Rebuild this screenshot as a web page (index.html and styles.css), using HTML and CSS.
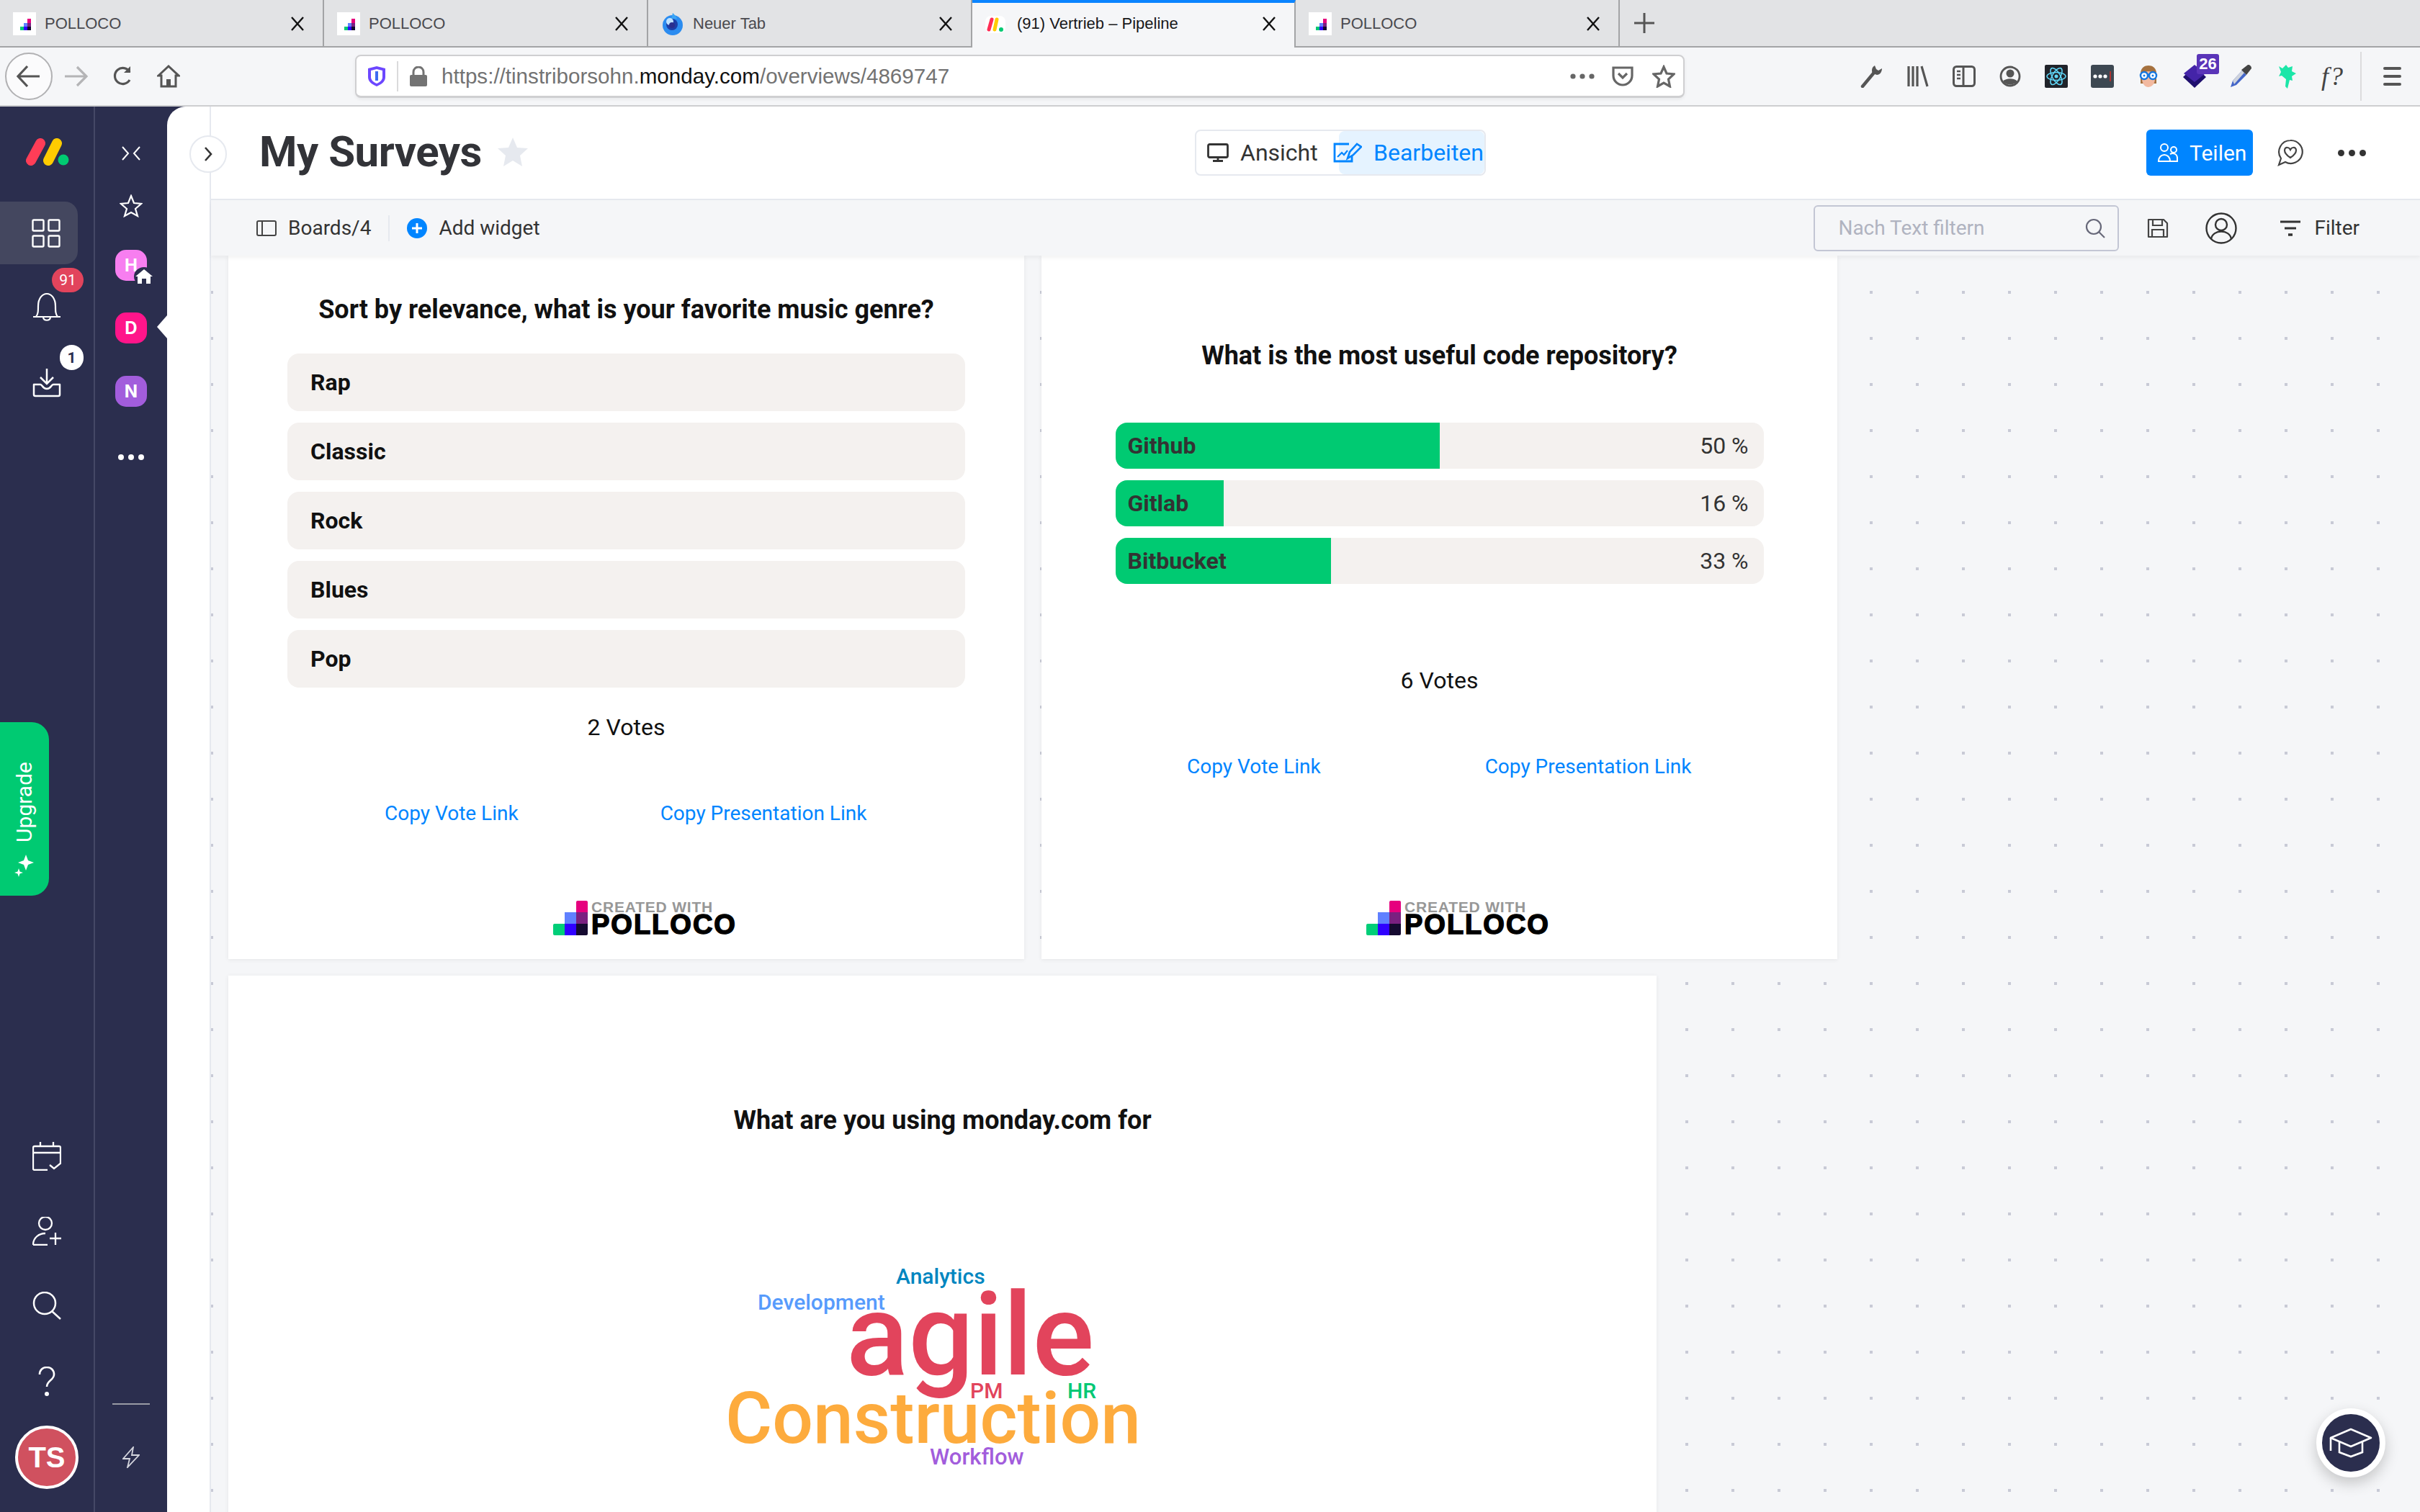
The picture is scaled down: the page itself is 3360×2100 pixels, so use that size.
FILE: index.html
```html
<!DOCTYPE html>
<html lang="de">
<head>
<meta charset="utf-8">
<title>My Surveys</title>
<link rel="stylesheet" href="styles.css">
</head>
<body>
<svg class="defs" width="0" height="0">
  <defs>
    <symbol id="pollo" viewBox="0 0 32 32"><rect width="32" height="32" fill="#fff"/><rect x="10" y="20" width="5" height="5" fill="#00c875"/><rect x="15" y="15" width="5" height="5" fill="#6080ff"/><rect x="15" y="20" width="5" height="5" fill="#3000ff"/><rect x="20" y="9" width="5" height="6" fill="#e6007e"/><rect x="20" y="15" width="5" height="5" fill="#7a2080"/><rect x="20" y="20" width="5" height="5" fill="#150a30"/></symbol>
    <symbol id="closex" viewBox="0 0 20 20"><path d="M2 1l16 18M18 1L2 19" stroke="#111" stroke-width="2.4" fill="none"/></symbol>
  </defs>
</svg>
<header class="tabbar">
  <div class="tab"><svg class="fav"><use href="#pollo"/></svg><span class="tab-title">POLLOCO</span><svg class="close"><use href="#closex"/></svg></div>
  <div class="tab"><svg class="fav"><use href="#pollo"/></svg><span class="tab-title">POLLOCO</span><svg class="close"><use href="#closex"/></svg></div>
  <div class="tab"><svg class="fav" viewBox="0 0 32 32"><circle cx="16" cy="18" r="14" fill="#2b8cf0"/><path d="M16 1c3 3 5 5 6 8l-8 1z" fill="#3aa5f5"/><circle cx="15" cy="17" r="8" fill="#1c3fa8"/><circle cx="12" cy="13" r="5" fill="#bfe2ff"/><circle cx="15" cy="18" r="4" fill="#2a2f8f"/></svg><span class="tab-title">Neuer Tab</span><svg class="close"><use href="#closex"/></svg></div>
  <div class="tab tab-active"><svg class="fav" viewBox="0 0 32 32"><rect x="2" y="5" width="28" height="24" rx="8" fill="#fff"/><path d="M7 24l4-14" stroke="#ff2d55" stroke-width="5" stroke-linecap="round"/><path d="M15 24l3-14" stroke="#ffcb00" stroke-width="5" stroke-linecap="round"/><circle cx="24" cy="24" r="3" fill="#00ca72"/></svg><span class="tab-title">(91) Vertrieb – Pipeline</span><svg class="close"><use href="#closex"/></svg></div>
  <div class="tab"><svg class="fav"><use href="#pollo"/></svg><span class="tab-title">POLLOCO</span><svg class="close"><use href="#closex"/></svg></div>
  <div class="newtab"><svg width="28" height="28" viewBox="0 0 28 28"><path d="M14 0v28M0 14h28" stroke="#555" stroke-width="3"/></svg></div>
</header>

<nav class="navbar">
  <div class="back"><svg width="34" height="32" viewBox="0 0 34 32"><path d="M32 16H3M15 2L2 16l13 14" fill="none" stroke="#555" stroke-width="3.2"/></svg></div>
  <div class="slot"><svg width="32" height="30" viewBox="0 0 32 30"><path d="M0 15h29M17 2l13 13-13 13" fill="none" stroke="#b4b4b6" stroke-width="3.2"/></svg></div>
  <div class="slot"><svg width="32" height="30" viewBox="0 0 32 30"><path d="M26 20a11 11 0 1 1 0-11" fill="none" stroke="#555" stroke-width="3.2"/><path d="M27 1v9h-9z" fill="#555"/></svg></div>
  <div class="slot"><svg width="32" height="32" viewBox="0 0 32 32"><path d="M2 15L16 2l14 13h-4v15H6V15z" fill="none" stroke="#555" stroke-width="3"/><rect x="13" y="20" width="6" height="10" fill="#555"/></svg></div>
  <div class="urlbar">
    <svg class="shield" width="26" height="30" viewBox="0 0 26 30"><path d="M13 1l12 3v12c0 6-5 10-12 13C6 26 1 22 1 16V4z" fill="#6c47ff"/><path d="M13 5l8 2v9c0 4-3 7-8 9-5-2-8-5-8-9V7z" fill="#fff"/><path d="M11 8h4v13h-4z" fill="#3d6cf0"/></svg>
    <span class="url-sep"></span>
    <svg class="lock" width="26" height="28" viewBox="0 0 26 28"><path d="M6 12V8a7 7 0 0 1 14 0v4" fill="none" stroke="#737373" stroke-width="3"/><rect x="1" y="12" width="24" height="16" rx="2" fill="#737373"/></svg>
    <span class="url"><span class="url-dim">https://tinstriborsohn.</span>monday.com<span class="url-dim">/overviews/4869747</span></span>
    <svg class="url-dots" width="34" height="8" viewBox="0 0 34 8"><circle cx="4" cy="4" r="3.6" fill="#666"/><circle cx="17" cy="4" r="3.6" fill="#666"/><circle cx="30" cy="4" r="3.6" fill="#666"/></svg>
    <svg class="pocket" width="30" height="28" viewBox="0 0 30 28"><path d="M2 2h26v11a13 13 0 0 1-26 0z" fill="none" stroke="#666" stroke-width="3.2"/><path d="M9 10l6 6 6-6" fill="none" stroke="#666" stroke-width="3.2"/></svg>
    <svg class="urlstar" width="32" height="32" viewBox="0 0 32 32"><path d="M16 3l4 9 10 1-7.500 7 2 10L16 25l-8.500 5 2-10L2 13l10-1z" fill="none" stroke="#666" stroke-width="3.200"/></svg>
  </div>
  <div class="ext-group">
    <div class="slot"><svg width="32" height="32" viewBox="0 0 32 32"><path d="M3 30L18 12" stroke="#555" stroke-width="4.500" stroke-linecap="round"/><path d="M20 1c-4 2-5 7-3 11l6 2c4 0 7-4 7-9l-5 3-3-2z" fill="#555"/></svg></div>
    <div class="slot"><svg width="32" height="30" viewBox="0 0 32 30"><path d="M3 1v28M9 1v28M15 1v28M21 1l8 28" stroke="#555" stroke-width="3.200" fill="none"/></svg></div>
    <div class="slot"><svg width="32" height="30" viewBox="0 0 32 30"><rect x="1.500" y="1.500" width="29" height="27" rx="4" fill="none" stroke="#555" stroke-width="3"/><path d="M15 2v26" stroke="#555" stroke-width="3"/><path d="M6 8h5M6 13h5M6 18h5" stroke="#555" stroke-width="2.500"/></svg></div>
    <div class="slot"><svg width="30" height="30" viewBox="0 0 30 30"><circle cx="15" cy="15" r="13" fill="none" stroke="#555" stroke-width="2.800"/><circle cx="15" cy="11" r="5.500" fill="#555"/><path d="M5 22c4-5 16-5 20 0-5 6-15 6-20 0z" fill="#555"/></svg></div>
    <div class="slot"><svg width="32" height="32" viewBox="0 0 32 32"><rect width="32" height="32" rx="2" fill="#20232a"/><g fill="none" stroke="#61dafb" stroke-width="1.500"><ellipse cx="16" cy="16" rx="13" ry="5.500"/><ellipse cx="16" cy="16" rx="13" ry="5.500" transform="rotate(60 16 16)"/><ellipse cx="16" cy="16" rx="13" ry="5.500" transform="rotate(120 16 16)"/></g><circle cx="16" cy="16" r="2.500" fill="#61dafb"/></svg></div>
    <div class="slot"><svg width="32" height="32" viewBox="0 0 32 32"><rect width="32" height="32" rx="3" fill="#3d4852"/><circle cx="6" cy="16" r="2.600" fill="#fff"/><circle cx="13" cy="16" r="2.600" fill="#fff"/><circle cx="20" cy="16" r="2.600" fill="#fff"/><path d="M27 9v14" stroke="#d32d27" stroke-width="1.500"/></svg></div>
    <div class="slot"><svg width="30" height="32" viewBox="0 0 30 32"><path d="M4 26V12C4 4 10 1 15 1s11 3 11 11v14z" fill="#a5713f"/><ellipse cx="15" cy="20" rx="9" ry="11" fill="#f2b9a0"/><circle cx="9" cy="15" r="5" fill="#fff" stroke="#1577e0" stroke-width="2.500"/><circle cx="21" cy="15" r="5" fill="#fff" stroke="#1577e0" stroke-width="2.500"/><circle cx="9" cy="15" r="1.500" fill="#1577e0"/><circle cx="21" cy="15" r="1.500" fill="#1577e0"/></svg></div>
    <div class="slot slot-badged"><svg width="32" height="32" viewBox="0 0 32 32"><path d="M16 2l16 15-16 15L0 17z" fill="#1f0f6e"/><path d="M16 0l15 12-15 12L1 12z" fill="#4424a8"/></svg><span class="ext-badge">26</span></div>
    <div class="slot"><svg width="32" height="34" viewBox="0 0 32 34"><path d="M2 32l3-9 13-14 6 6-14 14z" fill="#4466c8"/><path d="M5 23L18 9l3 3L7 28z" fill="#cfd3dc"/><path d="M17 8l9-7c3 0 5 2 5 5l-7 9z" fill="#444"/></svg></div>
    <div class="slot"><svg width="28" height="34" viewBox="0 0 28 34"><path d="M3 3l5 3 5-5 3 4 6-2-1 7 6 3-6 4 1 6-4-1-3 12-3-3 1-10-6-5-4 1 3-6z" fill="#1ce6a8"/></svg></div>
    <div class="slot"><span class="fq">f?</span></div>
  </div>
  <span class="nav-sep"></span>
  <div class="burger"><span></span><span></span><span></span></div>
</nav>

<div class="app">
  <aside class="rail">
    <svg class="logo" width="62" height="38" viewBox="0 0 62 38"><path d="M9 31L22 7" stroke="#ff3d57" stroke-width="14" stroke-linecap="round"/><path d="M33 31L45 7" stroke="#ffcb00" stroke-width="14" stroke-linecap="round"/><circle cx="54" cy="30" r="7.500" fill="#00ca72"/></svg>
    <div class="rail-active"><svg width="40" height="40" viewBox="0 0 40 40"><g fill="none" stroke="#fff" stroke-width="2.400"><rect x="1.500" y="1.500" width="15" height="15" rx="1.500"/><rect x="23.500" y="1.500" width="15" height="15" rx="1.500"/><rect x="1.500" y="23.500" width="15" height="15" rx="1.500"/><rect x="23.500" y="23.500" width="15" height="15" rx="1.500"/></g></svg></div>
    <div class="rail-bell"><svg width="40" height="40" viewBox="0 0 40 40"><path d="M1 34h38M5 34c3-4 3-8 3-15C8 8 14 2 20 2s12 6 12 17c0 7 0 11 3 15M15 35c1 5 9 5 10 0" fill="none" stroke="#fff" stroke-width="2.200"/></svg><span class="badge badge-red">91</span></div>
    <div class="rail-dl"><svg width="40" height="40" viewBox="0 0 40 40"><path d="M20 0v20M11 12l9 9 9-9" fill="none" stroke="#fff" stroke-width="2.500"/><path d="M2 22h9c3 0 3 6 9 6s6-6 9-6h9v14a2 2 0 0 1-2 2H4a2 2 0 0 1-2-2z" fill="none" stroke="#fff" stroke-width="2.500" stroke-linejoin="round"/></svg><span class="badge badge-white">1</span></div>
    <div class="rail-bottom">
      <svg width="40" height="40" viewBox="0 0 40 40"><path d="M21 39H3a2 2 0 0 1-2-2V8a2 2 0 0 1 2-2h34a2 2 0 0 1 2 2v22M1 15h38M11 0v6M29 0v6" fill="none" stroke="#fff" stroke-width="2.300"/><path d="M24 32l6 5 10-8" fill="none" stroke="#fff" stroke-width="2.300"/></svg>
      <svg width="40" height="40" viewBox="0 0 40 40"><circle cx="18" cy="9" r="9" fill="none" stroke="#fff" stroke-width="2.300"/><path d="M1 39c0-10 8-16 17-16M1 39h20M24 30h16M32 22v17" fill="none" stroke="#fff" stroke-width="2.300"/></svg>
      <svg width="40" height="40" viewBox="0 0 40 40"><circle cx="17" cy="16" r="15" fill="none" stroke="#fff" stroke-width="2.500"/><path d="M27 27l12 11" stroke="#fff" stroke-width="2.500"/></svg>
      <svg width="24" height="42" viewBox="0 0 24 42"><path d="M2 11C2 5 6 1 12 1s10 4 10 10c0 8-10 8-10 17" fill="none" stroke="#fff" stroke-width="2.600"/><circle cx="12" cy="38" r="3" fill="#fff"/></svg>
      <div class="avatar">TS</div>
    </div>
  </aside>
  <aside class="rail2">
    <svg class="r2-collapse" width="28" height="20" viewBox="0 0 28 20"><path d="M2 1l8 9-8 9M26 1l-8 9 8 9" fill="none" stroke="#fff" stroke-width="2"/></svg>
    <svg class="r2-star" width="32" height="32" viewBox="0 0 32 32"><path d="M16 2l4 10 10 1-8 7 3 10-9-5-9 5 3-10-8-7 10-1z" fill="none" stroke="#fff" stroke-width="2.200"/></svg>
    <div class="ws ws-h">H<span class="ws-home"><svg width="24" height="20" viewBox="0 0 24 20"><path d="M0 10L12 0l12 10h-3v10h-6v-7H9v7H3V10z" fill="#fff"/></svg></span></div>
    <div class="ws ws-d">D</div>
    <div class="ws ws-n">N</div>
    <div class="r2-dots"><span></span><span></span><span></span></div>
    <div class="r2-bottom">
      <span class="r2-line"></span>
      <svg width="24" height="30" viewBox="0 0 24 30"><path d="M15 1L1 17h9l-3 12 16-17h-10z" fill="none" stroke="#d5d6de" stroke-width="1.800"/></svg>
    </div>
  </aside>
  <span class="notch"></span>
  <div class="upgrade"><svg class="spark" width="32" height="30" viewBox="0 0 32 30"><path d="M20 6l3 8 8 3-8 3-3 8-3-8-8-3 8-3zM6 1l1.500 4.500L12 7 7.500 8.500 6 13 4.500 8.500 0 7l4.500-1.500z" fill="#fff"/></svg><span class="upgrade-text">Upgrade</span></div>

  <main class="main">
    <button class="panel-toggle"><svg width="14" height="24" viewBox="0 0 14 24"><path d="M3 3l8 9-8 9" fill="none" stroke="#333" stroke-width="2.600"/></svg></button>
    <div class="content">
      <section class="head">
        <div class="head-left">
          <h1 class="page-title">My Surveys</h1>
          <svg class="title-star" width="42" height="40" viewBox="0 0 42 40"><path d="M21 0l6 14 15 1-11 10 3 15-13-8-13 8 3-15L0 15l15-1z" fill="#e6e9ef"/></svg>
        </div>
        <div class="mode">
          <div class="mode-view"><svg width="30" height="26" viewBox="0 0 30 26"><rect x="1.500" y="1.500" width="27" height="18" rx="2" fill="none" stroke="#333" stroke-width="2.800"/><path d="M15 20v4M8 24.500h14" stroke="#333" stroke-width="2.800"/></svg><span>Ansicht</span></div>
          <div class="mode-edit"><svg class="edit-ico" width="40" height="28" viewBox="0 0 40 28"><path d="M22 2H2v24h24V14" fill="none" stroke="#0085ff" stroke-width="2.800"/><path d="M6 20l6-6 3 3 5-6" fill="none" stroke="#0085ff" stroke-width="2.200"/><path d="M20 22l3-9L33 2l6 4-11 11z" fill="#e5f3ff" stroke="#0085ff" stroke-width="2.600"/></svg><span>Bearbeiten</span></div>
        </div>
        <div class="head-right">
          <button class="share"><svg width="28" height="26" viewBox="0 0 28 26"><g fill="none" stroke="#fff" stroke-width="2"><circle cx="9" cy="6" r="5"/><circle cx="22" cy="9" r="4"/><path d="M1 25c0-12 16-12 16 0zM17 15c4-2 10-1 10 6v4H17"/></g></svg><span>Teilen</span></button>
          <svg class="heart-chat" width="36" height="38" viewBox="0 0 36 38"><path d="M18 2a16 16 0 1 1-7 30l-9 4 3-9A16 16 0 0 1 18 2z" fill="none" stroke="#444" stroke-width="2.200"/><path d="M18 26c-12-8-8-15-4-14 2 0 3 1 4 3 1-2 2-3 4-3 4-1 8 6-4 14z" fill="none" stroke="#444" stroke-width="2.200"/></svg>
          <div class="more"><span></span><span></span><span></span></div>
        </div>
      </section>
      <section class="tools">
        <svg class="t-board" width="28" height="22" viewBox="0 0 28 22"><rect x="1" y="1" width="26" height="20" rx="2" fill="none" stroke="#444" stroke-width="2"/><path d="M8 1v20" stroke="#444" stroke-width="2"/></svg>
        <span class="t-text t-boards">Boards/4</span>
        <span class="t-sep"></span>
        <svg class="t-add" width="28" height="28" viewBox="0 0 28 28"><circle cx="14" cy="14" r="14" fill="#0085ff"/><path d="M14 7v14M7 14h14" stroke="#fff" stroke-width="3"/></svg>
        <span class="t-text">Add widget</span>
        <div class="search"><span class="ph">Nach Text filtern</span><svg width="28" height="28" viewBox="0 0 28 28"><circle cx="12" cy="12" r="10" fill="none" stroke="#676879" stroke-width="2.200"/><path d="M19 19l8 8" stroke="#676879" stroke-width="2.200"/></svg></div>
        <svg class="t-save" width="30" height="28" viewBox="0 0 30 28"><path d="M2 2h21l5 5v19H2z" fill="none" stroke="#444" stroke-width="2.200" stroke-linejoin="round"/><path d="M8 2v8h13V2M7 26V16h16v10" fill="none" stroke="#444" stroke-width="2.200"/></svg>
        <svg class="t-user" width="44" height="44" viewBox="0 0 44 44"><circle cx="22" cy="22" r="20.500" fill="none" stroke="#333" stroke-width="2.400"/><circle cx="22" cy="17" r="8" fill="none" stroke="#333" stroke-width="2.400"/><path d="M8 37c2-14 26-14 28 0" fill="none" stroke="#333" stroke-width="2.400"/></svg>
        <svg class="t-filter" width="28" height="22" viewBox="0 0 28 22"><path d="M0 2h28M6 11h16" stroke="#333" stroke-width="3"/><path d="M11 20h6" stroke="#333" stroke-width="3.500"/></svg>
        <span class="t-text">Filter</span>
      </section>
      <section class="canvas">
        <div class="board">
          <article class="card card-rank">
            <h2 class="q">Sort by relevance, what is your favorite music genre?</h2>
            <ul class="opts">
              <li class="opt">Rap</li>
              <li class="opt">Classic</li>
              <li class="opt">Rock</li>
              <li class="opt">Blues</li>
              <li class="opt">Pop</li>
            </ul>
            <p class="votes">2 Votes</p>
            <div class="links links-rank"><a class="lnk">Copy Vote Link</a><a class="lnk">Copy Presentation Link</a></div>
            <div class="brand">
              <div class="brand-mark"><i class="m0"></i><i class="m0"></i><i class="m1"></i><i class="m0"></i><i class="m2"></i><i class="m3"></i><i class="m4"></i><i class="m5"></i><i class="m6"></i></div>
              <div class="brand-text"><span class="b-small">CREATED WITH</span><span class="b-big">POLLOCO</span></div>
            </div>
          </article>
          <article class="card card-poll">
            <h2 class="q">What is the most useful code repository?</h2>
            <div class="bars">
              <div class="bar"><div class="fill" style="width:50%"></div><span class="bar-l">Github</span><span class="bar-v">50 %</span></div>
              <div class="bar"><div class="fill" style="width:16.670%"></div><span class="bar-l">Gitlab</span><span class="bar-v">16 %</span></div>
              <div class="bar"><div class="fill" style="width:33.330%"></div><span class="bar-l">Bitbucket</span><span class="bar-v">33 %</span></div>
            </div>
            <p class="votes">6 Votes</p>
            <div class="links links-poll"><a class="lnk">Copy Vote Link</a><a class="lnk">Copy Presentation Link</a></div>
            <div class="brand">
              <div class="brand-mark"><i class="m0"></i><i class="m0"></i><i class="m1"></i><i class="m0"></i><i class="m2"></i><i class="m3"></i><i class="m4"></i><i class="m5"></i><i class="m6"></i></div>
              <div class="brand-text"><span class="b-small">CREATED WITH</span><span class="b-big">POLLOCO</span></div>
            </div>
          </article>
          <article class="card card-cloud">
            <h2 class="q">What are you using monday.com for</h2>
            <span class="w w-analytics">Analytics</span>
            <span class="w w-dev">Development</span>
            <span class="w w-agile">agile</span>
            <span class="w w-pm">PM</span>
            <span class="w w-hr">HR</span>
            <span class="w w-con">Construction</span>
            <span class="w w-flow">Workflow</span>
          </article>
        </div>
        <button class="help"><svg width="60" height="42" viewBox="0 0 60 42"><path d="M2 14L30 2l28 12-28 12z" fill="none" stroke="#fff" stroke-width="2.600" stroke-linejoin="round"/><path d="M14 20v14l16 6 16-6V20M2 14v18" fill="none" stroke="#fff" stroke-width="2.600"/></svg></button>
      </section>
    </div>
  </main>
</div>
</body>
</html>
```
FILE: styles.css
```css
* { box-sizing: border-box; }
html, body { margin: 0; padding: 0; }
body { width: 3360px; height: 2100px; overflow: hidden; display: flex; flex-direction: column; font-family: Roboto, "Liberation Sans", sans-serif; background: #f5f6f8; color: #333; }
.defs { position: absolute; }
svg { display: block; flex: none; }

/* browser chrome */
.tabbar { height: 66px; display: flex; background: #e2e3e5; border-bottom: 2px solid #a3a4a6; font-family: "Liberation Sans", Arial, sans-serif; }
.tab { width: 450px; height: 66px; display: flex; align-items: center; padding: 0 25px 0 18px; border-right: 2px solid #a3a4a6; }
.tab:nth-child(4) { width: 449px; }
.tab-active { background: #f5f6f8; border-top: 4px solid #0a84ff; padding-top: 0; padding-left: 16px; color: #111; }
.tab-active .fav { margin-top: -4px; }
.tab-active .close { margin-top: -4px; }
.tab-active .tab-title { margin-top: -4px; }
.fav { width: 32px; height: 32px; }
.close { width: 20px; height: 20px; margin-left: auto; }
.tab-title { font-size: 22px; margin-left: 12px; color: #4a4a4f; white-space: nowrap; }
.tab-active .tab-title { color: #18181a; margin-left: 14px; }
.newtab { margin: 0 0 0 20px; height: 66px; display: flex; align-items: center; padding-bottom: 2px; }

.navbar { height: 82px; display: flex; align-items: center; background: #f5f6f8; border-bottom: 2px solid #cecfd1; }
.back { width: 66px; height: 66px; margin-left: 7px; border-radius: 50%; background: #fbfbfc; border: 2px solid #b1b1b3; display: flex; align-items: center; justify-content: center; }
.slot { width: 64px; height: 48px; display: flex; align-items: center; justify-content: center; position: relative; }
.navbar > .slot:nth-child(2) { margin-left: 1px; }
.urlbar { width: 1846px; height: 60px; margin-left: 227px; background: #fff; border: 2px solid #cfcfd1; border-bottom-width: 3px; border-radius: 8px; display: flex; align-items: center; padding-left: 15px; box-shadow: 0 2px 5px rgba(0,0,0,.06); }
.url-sep { width: 2px; height: 42px; background: #dadadb; margin: 0 15px; }
.url { font-size: 29.600px; margin-left: 19px; color: #111; font-family: "Liberation Sans", Arial, sans-serif; white-space: nowrap; }
.url-dim { color: #737373; }
.url-dots { margin-left: auto; }
.pocket { margin-left: 24px; }
.urlstar { margin: 0 11px 0 26px; }
.ext-group { display: flex; margin-left: 228px; }
.ext-badge { position: absolute; left: 35px; top: -7px; width: 31px; height: 28px; background: #5a34b8; color: #fff; font: 700 22px "Liberation Sans", sans-serif; display: flex; align-items: center; justify-content: center; border-radius: 3px; }
.fq { font: italic 36px "Liberation Serif", serif; color: #444; letter-spacing: 2px; }
.nav-sep { width: 2px; height: 68px; background: #dcdcdd; margin-left: 6px; }
.burger { margin-left: 30px; display: flex; flex-direction: column; gap: 7px; }
.burger span { width: 25px; height: 4px; background: #555; border-radius: 2px; }

/* app */
.app { flex: 1; min-height: 0; display: flex; background: #2b2e4e; position: relative; }
.rail { width: 132px; flex: none; border-right: 2px solid #454866; display: flex; flex-direction: column; align-items: center; padding-top: 44px; }
.logo { margin-right: 0; }
.rail-active { width: 108px; height: 87px; align-self: flex-start; margin-top: 50px; background: #44475f; border-radius: 0 18px 18px 0; display: flex; align-items: center; justify-content: center; padding-left: 20px; }
.rail-bell { margin-top: 39px; position: relative; }
.rail-dl { margin-top: 66px; position: relative; }
.badge { position: absolute; display: flex; align-items: center; justify-content: center; font-size: 21px; border-radius: 17px; }
.badge-red { left: 27px; top: -34px; width: 44px; height: 34px; background: #e2445c; color: #fff; }
.badge-white { left: 38px; top: -33px; width: 33px; height: 35px; background: #fff; color: #2b2e4e; font-weight: 700; }
.rail-bottom { margin-top: auto; display: flex; flex-direction: column; align-items: center; padding-bottom: 32px; gap: 64px; }
.avatar { width: 88px; height: 88px; margin-top: -24px; border-radius: 50%; background: #d0515f; border: 4px solid #fff; color: #fff; font: 700 40px "Liberation Sans", sans-serif; display: flex; align-items: center; justify-content: center; }

.rail2 { width: 100px; flex: none; display: flex; flex-direction: column; align-items: center; padding-top: 55px; }
.r2-star { margin-top: 47px; }
.ws { width: 44px; height: 43px; border-radius: 15px; color: #fff; font: 700 24px Inter, sans-serif; display: flex; align-items: center; justify-content: center; position: relative; }
.ws-h { background: #f77ef0; margin-top: 45px; }
.ws-d { background: #ff158a; margin-top: 44px; }
.ws-n { background: #a25ddc; margin-top: 45px; }
.ws-home { position: absolute; left: 26px; top: 24px; width: 28px; height: 26px; border-radius: 50%; background: #2b2e4e; display: flex; align-items: center; justify-content: center; }
.r2-dots { margin-top: 66px; display: flex; gap: 6px; }
.r2-dots span { width: 8px; height: 8px; border-radius: 50%; background: #fff; }
.r2-bottom { margin-top: auto; display: flex; flex-direction: column; align-items: center; padding-bottom: 61px; gap: 58px; }
.r2-line { width: 52px; height: 2px; background: #999aa5; }

.notch { position: absolute; left: 218px; top: 290px; width: 0; height: 0; border-style: solid; border-width: 16px 14px 16px 0; border-color: transparent #fff transparent transparent; }
.upgrade { position: absolute; left: 0; top: 855px; width: 68px; height: 241px; background: #00ca72; border-radius: 0 24px 24px 0; display: flex; flex-direction: column-reverse; align-items: center; padding-bottom: 27px; gap: 17px; color: #fff; }
.spark { transform: rotate(-90deg); }
.upgrade-text { writing-mode: vertical-rl; transform: rotate(180deg); font-size: 30px; line-height: 34px; }

.main { flex: 1; min-width: 0; display: flex; background: #fff; border-top-left-radius: 26px; position: relative; padding-left: 59px; }
.panel-toggle { position: absolute; left: 31px; top: 40px; width: 52px; height: 52px; border-radius: 50%; border: 2px solid #e6e9ef; background: #fff; padding: 0; display: flex; align-items: center; justify-content: center; z-index: 3; }
.content { flex: 1; min-width: 0; display: flex; flex-direction: column; border-left: 2px solid #e6e9ef; }

.head { height: 130px; flex: none; background: #fff; border-bottom: 2px solid #e6e9ef; display: flex; align-items: center; }
.head-left { width: 1366px; padding-left: 67px; display: flex; align-items: center; gap: 22px; padding-bottom: 2px; }
.page-title { margin: 0; font-size: 60px; font-weight: 700; color: #323338; line-height: 70px; white-space: nowrap; letter-spacing: -0.5px; }
.mode { width: 404px; height: 64px; border: 2px solid #e6e9ef; border-radius: 8px; display: flex; font-size: 32px; }
.mode-view { width: 198px; display: flex; align-items: center; padding-left: 15px; gap: 16px; color: #333; }
.mode-edit { flex: 1; background: #e5f3ff; border-radius: 8px; display: flex; align-items: center; gap: 16px; color: #0085ff; }
.edit-ico { margin-left: -8px; }
.head-right { margin-left: auto; display: flex; align-items: center; padding-right: 75px; }
.share { width: 148px; height: 64px; border: 0; border-radius: 6px; background: #0085ff; color: #fff; font: 30px Roboto, sans-serif; display: flex; align-items: center; padding: 0 0 0 16px; gap: 16px; }
.heart-chat { margin-left: 34px; }
.more { margin-left: 48px; display: flex; gap: 6px; }
.more span { width: 9px; height: 9px; border-radius: 50%; background: #333; }

.tools { height: 77px; flex: none; background: #f5f6f8; display: flex; align-items: center; padding-left: 63px; box-shadow: 0 3px 6px rgba(0,0,0,.05); position: relative; z-index: 2; }
.t-text { font-size: 28px; color: #333; white-space: nowrap; }
.t-board { margin-right: 16px; }
.t-sep { width: 2px; height: 36px; background: #e6e9ef; margin: 0 24px; }
.t-add { margin-right: 16px; }
.search { width: 424px; height: 64px; margin-left: auto; border: 2px solid #c3c6d4; border-radius: 6px; display: flex; align-items: center; justify-content: space-between; padding: 0 17px 0 32px; }
.ph { font-size: 28px; color: #b0b3c0; }
.t-save { margin-left: 39px; }
.t-user { margin-left: 51px; }
.t-filter { margin-left: 60px; margin-right: 19px; }
.tools .t-text:last-child { margin-right: 84px; }

.canvas { flex: 1; min-height: 0; position: relative; overflow: hidden; background-color: #f5f6f8; background-image: radial-gradient(circle 2.500px at 3px 3px, #c8cad6 98%, transparent 100%); background-size: 64px 64px; background-position: 62px 48px; }
.board { display: grid; grid-template-columns: 1105px 1105px; grid-template-rows: 977px 1000px; gap: 23px 24px; padding-left: 24px; }
.card { background: #fff; box-shadow: 0 1px 6px rgba(0,0,0,.07); display: flex; flex-direction: column; align-items: center; position: relative; overflow: hidden; }
.card-cloud { grid-column: 1 / 3; width: 1983px; }
.q { margin: 0; font-size: 36px; line-height: 44px; font-weight: 700; color: #111; white-space: nowrap; }
.card-rank .q { margin-top: 53px; }
.card-poll .q { margin-top: 117px; }
.card-cloud .q { margin-top: 179px; }

.opts { list-style: none; width: 941px; margin: 39px 0 0; padding: 0; display: flex; flex-direction: column; gap: 16px; }
.opt { height: 80px; background: #f4f1ef; border-radius: 16px; padding-left: 32px; font-size: 32px; font-weight: 700; line-height: 80px; color: #111; }

.bars { width: 900px; margin-top: 71px; display: flex; flex-direction: column; gap: 16px; }
.bar { height: 64px; background: #f4f1ef; border-radius: 16px; position: relative; overflow: hidden; display: flex; align-items: center; justify-content: space-between; padding: 0 21px 0 17px; font-size: 32px; }
.fill { position: absolute; left: 0; top: 0; bottom: 0; background: #00ca72; }
.bar-l, .bar-v { position: relative; color: #333; }
.bar-l { font-weight: 700; }

.votes { margin: 0; font-size: 32px; line-height: 40px; color: #111; }
.card-rank .votes { margin-top: 35px; }
.card-poll .votes { margin-top: 114px; }
.links { align-self: flex-start; display: flex; font-size: 28px; line-height: 34px; color: #0085ff; }
.links-rank { margin-top: 83px; padding-left: 217px; gap: 197px; }
.links-poll { margin-top: 83px; padding-left: 202px; gap: 228px; }

.brand { margin-top: auto; margin-bottom: 33px; display: flex; gap: 5px; align-items: flex-end; }
.brand-mark { display: grid; grid-template-columns: repeat(3, 16px); grid-auto-rows: 16px; }
.m1 { background: #e6007e; border-radius: 2px 2px 0 0; }
.m2 { background: #6080ff; }
.m3 { background: #7a2080; }
.m4 { background: #00ce78; border-radius: 2px 0 0 2px; }
.m5 { background: #3000ff; }
.m6 { background: #150a30; border-radius: 0 0 2px 0; }
.brand-text { display: flex; flex-direction: column; width: 150px; }
.b-small { font: 700 21px/19px "Liberation Sans Narrow", "Liberation Sans", sans-serif; color: #979797; letter-spacing: .8px; white-space: nowrap; }
.b-big { font: 700 38px/30px "Liberation Sans Narrow", "Liberation Sans", sans-serif; color: #000; letter-spacing: 2px; -webkit-text-stroke: 1.500px #000; white-space: nowrap; }

.w { position: absolute; line-height: 1; font-weight: 500; white-space: nowrap; }
.w-analytics { left: 927px; top: 403px; font-size: 30px; color: #0086c0; }
.w-dev { left: 735px; top: 439px; font-size: 30px; color: #579bfc; }
.w-agile { left: 858px; top: 420px; font-size: 160px; color: #e2445c; }
.w-pm { left: 1030px; top: 562px; font-size: 30px; color: #e2445c; }
.w-hr { left: 1165px; top: 562px; font-size: 30px; color: #00c875; }
.w-con { left: 690px; top: 565px; font-size: 100px; color: #fdab3d; }
.w-flow { left: 974px; top: 653px; font-size: 31px; color: #a25ddc; }

.help { position: absolute; left: 2923px; top: 1601px; width: 96px; height: 96px; border-radius: 50%; background: #2b2e4e; border: 8px solid #fff; padding: 0; box-shadow: 0 8px 20px rgba(0,0,0,.2); display: flex; align-items: center; justify-content: center; }
```
